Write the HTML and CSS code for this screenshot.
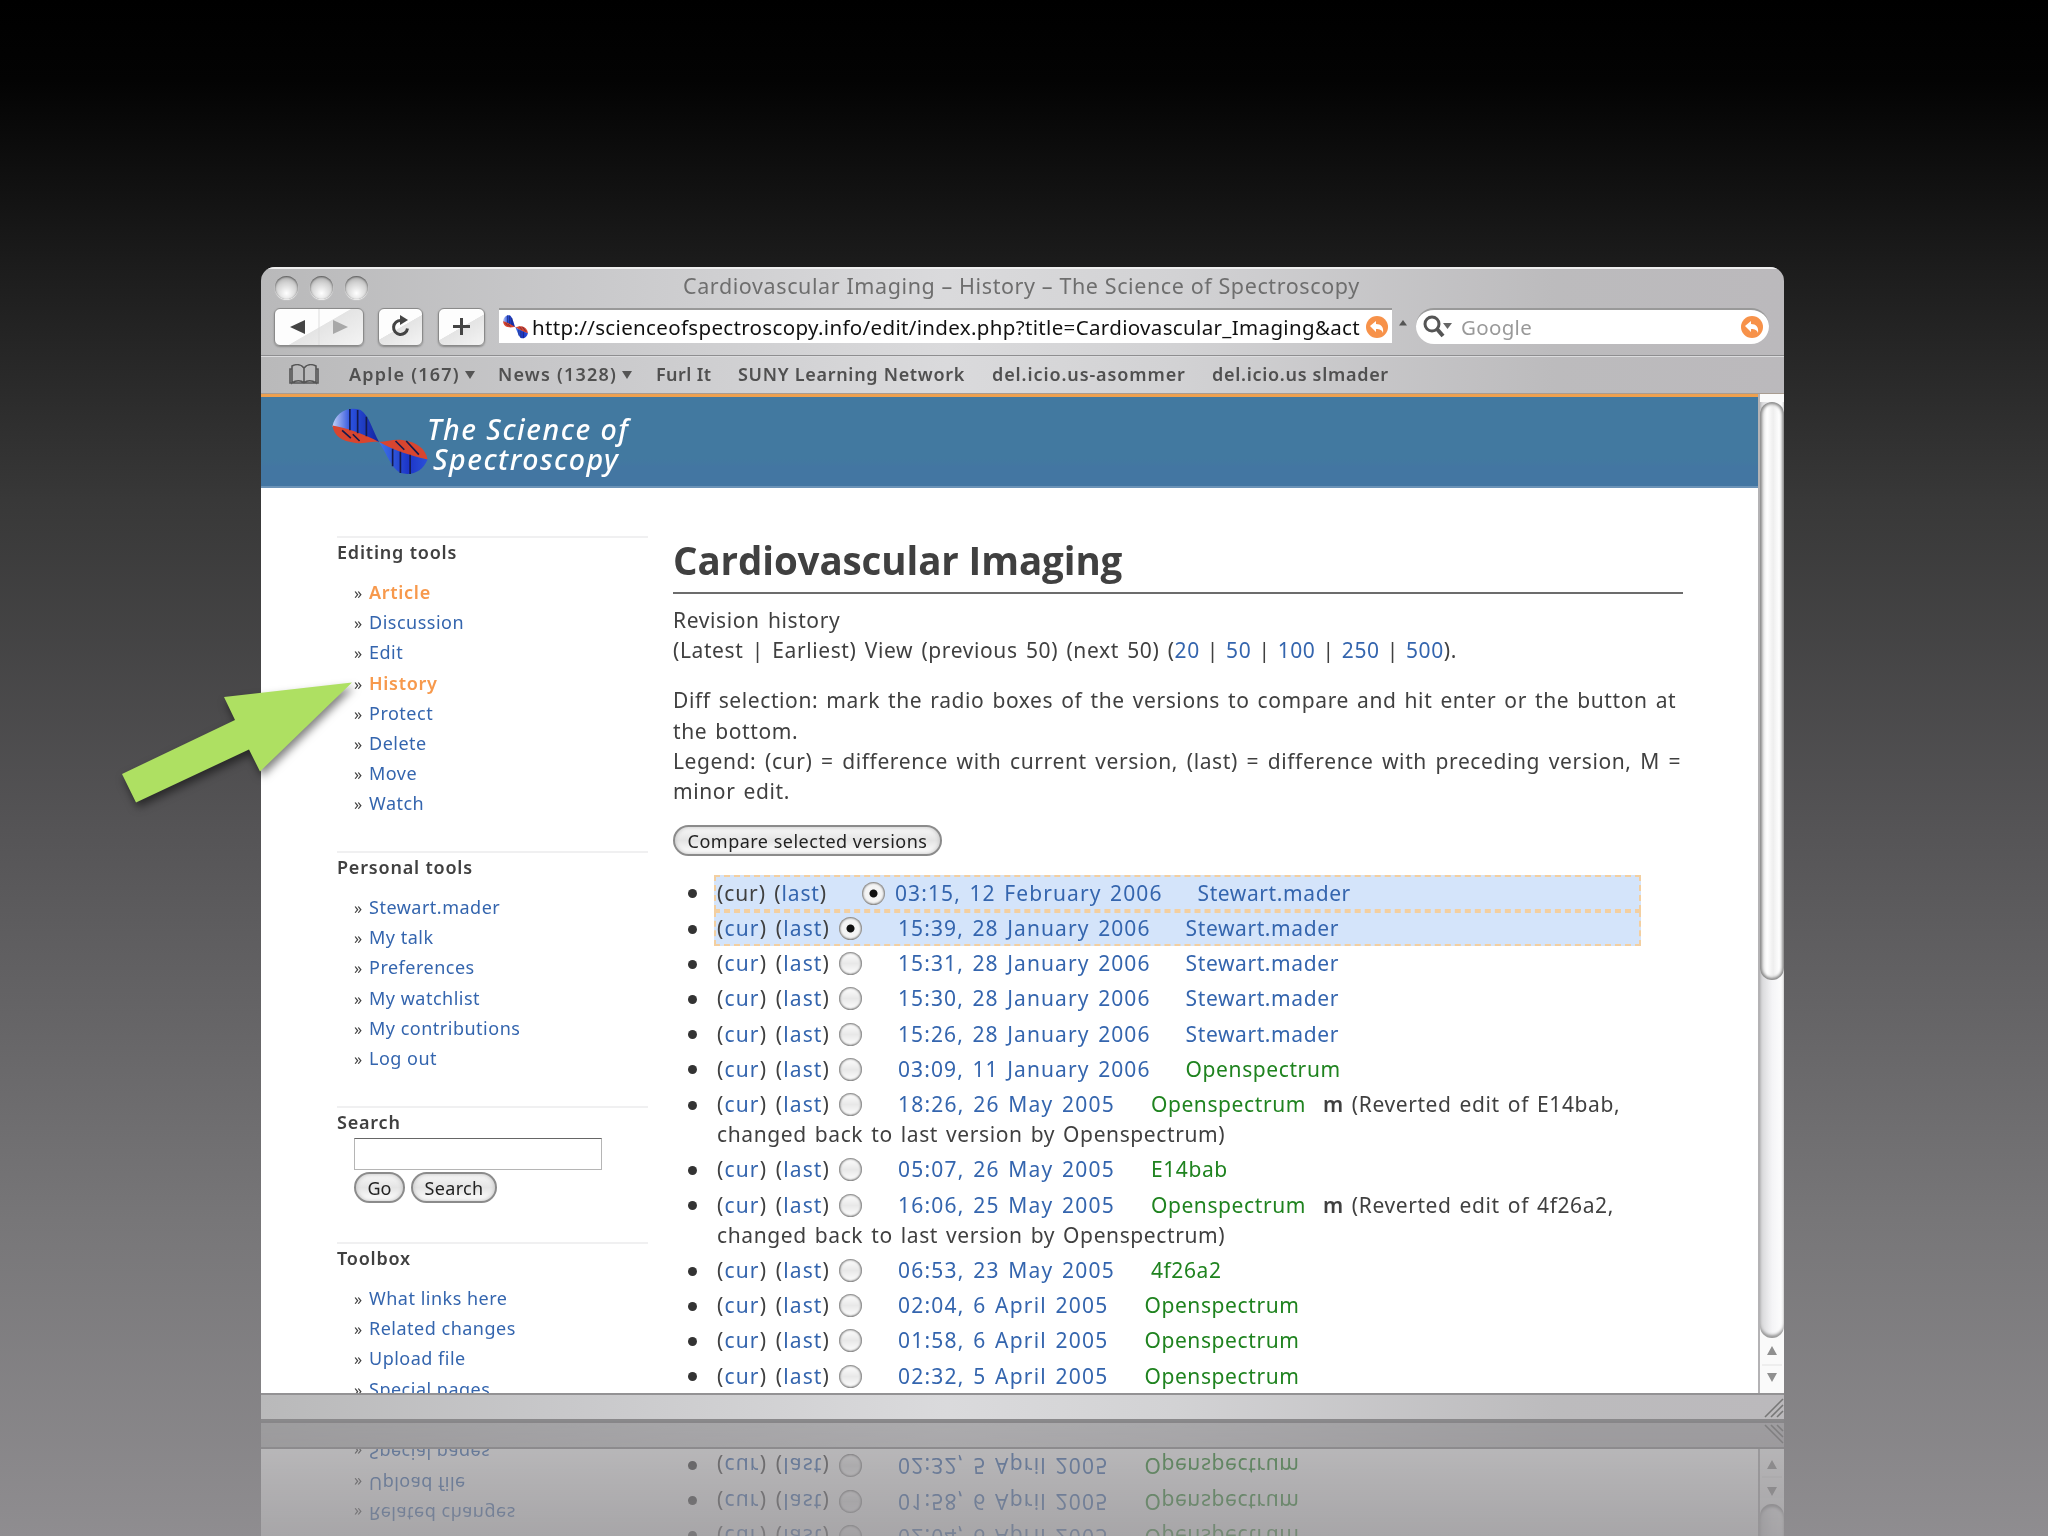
FILE: index.html
```html
<!DOCTYPE html>
<html>
<head>
<meta charset="utf-8">
<title>Cardiovascular Imaging - History</title>
<link rel="stylesheet" href="styles.css">
</head>
<body>

<div class="window">
  <div class="titlebar">
    <div class="lights"><span></span><span></span><span></span></div>
    <div class="title">Cardiovascular Imaging – History – The Science of Spectroscopy</div>
  </div>

  <div class="toolbar">
    <div class="btn nav">
      <svg width="88" height="36" viewBox="0 0 88 36"><path d="M30 11v14L15 18z" fill="#444"/><path d="M58 11v14l15-7z" fill="#a8a8a8"/><path d="M44 0v36" stroke="#ddd"/></svg>
    </div>
    <div class="btn reload">
      <svg width="43" height="36" viewBox="0 0 43 36"><path d="M22 11.500a7 7 0 1 0 6.500 8" fill="none" stroke="#444" stroke-width="3"/><path d="M21 6l8 5-8 5z" fill="#444"/></svg>
    </div>
    <div class="btn plus">
      <svg width="45" height="36" viewBox="0 0 45 36"><path d="M22.500 9v17M14 17.500h17" stroke="#444" stroke-width="3"/></svg>
    </div>
    <div class="address">
      <svg width="25" height="24" viewBox="0 0 98 70" preserveAspectRatio="none"><use href="#helix"/></svg>
      <span class="url">http://scienceofspectroscopy.info/edit/index.php?title=Cardiovascular_Imaging&amp;act</span>
      <svg class="snap" width="22" height="22" viewBox="0 0 22 22"><use href="#snapback"/></svg>
    </div>
    <svg class="caret" width="8" height="6" viewBox="0 0 8 6"><path d="M0 5.500L4 0l4 5.500z" fill="#555"/></svg>
    <div class="search">
      <svg width="31" height="24" viewBox="0 0 31 24"><circle cx="10" cy="9" r="7" fill="none" stroke="#555" stroke-width="3"/><path d="M15 14l6 7" stroke="#555" stroke-width="4"/><path d="M21 8h9l-4.500 6z" fill="#666"/></svg>
      <span class="google">Google</span>
      <svg class="snap" width="22" height="22" viewBox="0 0 22 22"><use href="#snapback"/></svg>
    </div>
  </div>

  <div class="bookmarks">
    <svg class="book" width="30" height="21" viewBox="0 0 30 21"><path d="M15 4C12 0 7 0 3 2v17c4-3 9-3 12 0 3-3 8-3 12 0V2C23 0 18 0 15 4zM15 4v15M3 5H1v14h28V5h-2" fill="none" stroke="#555" stroke-width="1.600"/></svg>
    <span class="b1">Apple (167)<i></i></span>
    <span class="b2">News (1328)<i></i></span>
    <span class="b3">Furl It</span>
    <span class="b4">SUNY Learning Network</span>
    <span class="b5">del.icio.us-asommer</span>
    <span class="b6">del.icio.us slmader</span>
  </div>

  <div class="view">
    <div class="page">
      <div class="banner">
        <svg class="logo" width="98" height="68" viewBox="0 0 98 70">
          <defs>
            <linearGradient id="blue" x1="0" y1="0" x2="1" y2="0">
              <stop offset="0" stop-color="#c3d0f5"/><stop offset=".4" stop-color="#2a50dd"/><stop offset="1" stop-color="#1224a0"/>
            </linearGradient>
            <linearGradient id="blue2" x1="0" y1="0" x2="1" y2="0">
              <stop offset="0" stop-color="#3f74ea"/><stop offset=".6" stop-color="#1c35c8"/><stop offset="1" stop-color="#2b50d8"/>
            </linearGradient>
            <g id="helix">
              <path d="M0 19C3 5 15-2 29 2c9 6 12 20 19 33C34 31 16 26 0 19z" fill="url(#blue)"/>
              <path d="M0 18c13 2 31 8 48 17-9-1-15 2-24 1C9 34 2 29 0 18z" fill="#d8452f"/>
              <path d="M48 35c8 0 14-3 24-2 15 2 24 9 26 20-14-2-34-8-50-18z" fill="#d8452f"/>
              <path d="M48 35c14 8 32 14 50 18-5 12-15 17-28 14-10-6-14-20-22-32z" fill="url(#blue2)"/>
              <path d="M18 1v22M26 2v24M35 9v20M10 23l9 8M21 27l7 7M62 42v18M70 45v22M80 48v20M76 34l13 14M65 34l9 9" stroke="#141a4c" stroke-width="1.700" fill="none"/>
            </g>
            <g id="snapback">
              <circle cx="11" cy="11" r="11" fill="#f7924a"/>
              <path d="M4 10l6-5v3c5 0 8 3 7 9-1-3-3-4-7-4v3z" fill="#fff"/>
            </g>
          </defs>
          <use href="#helix"/>
        </svg>
        <div class="sitename"><span>The Science of</span><span class="second">Spectroscopy</span></div>
      </div>

      <div class="columns">
        <div class="sidebar">
          <div class="portlet">
            <h5>Editing tools</h5>
            <ul>
              <li><a class="active" href="#">Article</a></li>
              <li><a href="#">Discussion</a></li>
              <li><a href="#">Edit</a></li>
              <li><a class="active" href="#">History</a></li>
              <li><a href="#">Protect</a></li>
              <li><a href="#">Delete</a></li>
              <li><a href="#">Move</a></li>
              <li><a href="#">Watch</a></li>
            </ul>
          </div>
          <div class="portlet">
            <h5>Personal tools</h5>
            <ul>
              <li><a href="#">Stewart.mader</a></li>
              <li><a href="#">My talk</a></li>
              <li><a href="#">Preferences</a></li>
              <li><a href="#">My watchlist</a></li>
              <li><a href="#">My contributions</a></li>
              <li><a href="#">Log out</a></li>
            </ul>
          </div>
          <div class="portlet find">
            <h5>Search</h5>
            <div class="field"></div>
            <div class="buttons"><span class="aqua go">Go</span><span class="aqua srch">Search</span></div>
          </div>
          <div class="portlet">
            <h5>Toolbox</h5>
            <ul>
              <li><a href="#">What links here</a></li>
              <li><a href="#">Related changes</a></li>
              <li><a href="#">Upload file</a></li>
              <li><a href="#">Special pages</a></li>
            </ul>
          </div>
        </div>

        <div class="content">
          <h1>Cardiovascular Imaging</h1>
          <p class="nav-links">Revision history<br>(Latest | Earliest) View (previous 50) (next 50) <span class="limits">(<a href="#">20</a> | <a href="#">50</a> | <a href="#">100</a> | <a href="#">250</a> | <a href="#">500</a>).</span></p>
          <p class="diff">Diff selection: mark the radio boxes of the versions to compare and hit enter or the button at<br>the bottom.<br><span class="legend">Legend: (cur) = difference with current version, (last) = difference with preceding version, M =</span><br>minor edit.</p>
          <span class="aqua compare">Compare selected versions</span>
          <ul class="history">
            <li class="selected first"><span class="marks">(cur) (<a href="#">last</a>)</span><span class="radio on"></span><a class="date" href="#">03:15, 12 February 2006</a><a href="#">Stewart.mader</a></li>
            <li class="selected"><span class="marks">(<a href="#">cur</a>) (<a href="#">last</a>)</span><span class="radio on"></span><a class="date" href="#">15:39, 28 January 2006</a><a href="#">Stewart.mader</a></li>
            <li><span class="marks">(<a href="#">cur</a>) (<a href="#">last</a>)</span><span class="radio"></span><a class="date" href="#">15:31, 28 January 2006</a><a href="#">Stewart.mader</a></li>
            <li><span class="marks">(<a href="#">cur</a>) (<a href="#">last</a>)</span><span class="radio"></span><a class="date" href="#">15:30, 28 January 2006</a><a href="#">Stewart.mader</a></li>
            <li><span class="marks">(<a href="#">cur</a>) (<a href="#">last</a>)</span><span class="radio"></span><a class="date" href="#">15:26, 28 January 2006</a><a href="#">Stewart.mader</a></li>
            <li><span class="marks">(<a href="#">cur</a>) (<a href="#">last</a>)</span><span class="radio"></span><a class="date" href="#">03:09, 11 January 2006</a><a class="new" href="#">Openspectrum</a></li>
            <li><span class="marks">(<a href="#">cur</a>) (<a href="#">last</a>)</span><span class="radio"></span><a class="date old" href="#">18:26, 26 May 2005</a><a class="new" href="#">Openspectrum</a><b>m</b> (Reverted edit of E14bab,<br>changed back to last version by Openspectrum)</li>
            <li><span class="marks">(<a href="#">cur</a>) (<a href="#">last</a>)</span><span class="radio"></span><a class="date old" href="#">05:07, 26 May 2005</a><a class="new" href="#">E14bab</a></li>
            <li><span class="marks">(<a href="#">cur</a>) (<a href="#">last</a>)</span><span class="radio"></span><a class="date old" href="#">16:06, 25 May 2005</a><a class="new" href="#">Openspectrum</a><b>m</b> (Reverted edit of 4f26a2,<br>changed back to last version by Openspectrum)</li>
            <li><span class="marks">(<a href="#">cur</a>) (<a href="#">last</a>)</span><span class="radio"></span><a class="date old" href="#">06:53, 23 May 2005</a><a class="new" href="#">4f26a2</a></li>
            <li><span class="marks">(<a href="#">cur</a>) (<a href="#">last</a>)</span><span class="radio"></span><a class="date old" href="#">02:04, 6 April 2005</a><a class="new" href="#">Openspectrum</a></li>
            <li><span class="marks">(<a href="#">cur</a>) (<a href="#">last</a>)</span><span class="radio"></span><a class="date old" href="#">01:58, 6 April 2005</a><a class="new" href="#">Openspectrum</a></li>
            <li><span class="marks">(<a href="#">cur</a>) (<a href="#">last</a>)</span><span class="radio"></span><a class="date old" href="#">02:32, 5 April 2005</a><a class="new" href="#">Openspectrum</a></li>
          </ul>
        </div>
      </div>
    </div>

    <div class="scrollbar">
      <div class="track"><div class="thumb"></div></div>
      <svg class="arrows" width="24" height="54" viewBox="0 0 24 54"><path d="M7 17l5-9 5 9zM7 35l5 9 5-9z" fill="#909090"/><path d="M2 27h20" stroke="#e2e2e2"/></svg>
    </div>
  </div>

  <div class="statusbar">
    <svg width="21" height="22" viewBox="0 0 21 22"><path d="M2 20L20 2M8 20L20 8M14 20l6-6" stroke="#777" stroke-width="1.600"/></svg>
  </div>
</div>

<!-- pointer to the History link -->
<svg class="pointer" width="400" height="200" viewBox="0 0 400 200">
  <path d="M122 124L235 70l-11-23 128-14.500-92 89-11-22-113 53z" fill="#aee062"/>
</svg>

</body>
</html>
```

FILE: styles.css
```css
body {
  margin: 0;
  height: 1536px;
  overflow: hidden;
  background: linear-gradient(#000 0, #030303 80px, #1c1c1c 267px, #383838 500px, #555456 830px, #777678 1220px, #8f8d90 1536px);
  font-family: "Noto Sans", "Open Sans", sans-serif;
  color: #404040;
}

a {
  color: #3465ae;
  text-decoration: none;
}

ul {
  list-style: none;
  margin: 0;
  padding: 0;
}

.window {
  display: flex;
  flex-direction: column;
  width: 1523px;
  height: 1154px;
  margin: 267px 0 0 261px;
  border-radius: 14px 14px 0 0;
  overflow: hidden;
  background: linear-gradient(90deg, #b9b9ba, #c8c8ca 20%, #dadadc 45%, #d2d2d4 60%, #bcbbbd 85%, #bbb9bc);
  -webkit-box-reflect: below 0 linear-gradient(transparent 88%, rgba(0,0,0,.22) 90%, rgba(0,0,0,.46));
}

/* title bar */
.titlebar {
  display: flex;
  align-items: center;
  height: 40px;
  box-shadow: inset 0 2px 0 #eee;
}

.lights {
  display: flex;
  gap: 12px;
  width: 422px;
  padding-left: 14px;
  box-sizing: border-box;
}

.lights span {
  width: 23px;
  height: 23px;
  border-radius: 50%;
  background: radial-gradient(circle at 50% 75%, #fff, #d4d4d4 50%, #999);
  box-shadow: inset 0 1px 2px #555, 0 1px 1px #eee;
}

.title {
  font-size: 21.500px;
  letter-spacing: .6px;
  line-height: 38px;
  padding-bottom: 2px;
  color: #6e6e6e;
  white-space: nowrap;
}

/* toolbar */
.toolbar {
  display: flex;
  align-items: flex-start;
  height: 49px;
  padding: 1px 15px 0 13px;
  box-sizing: border-box;
  border-bottom: 1px solid #8e8e90;
}

.btn {
  height: 36px;
  border: 1px solid #8a8a8a;
  border-radius: 6px;
  background: linear-gradient(150deg, #fdfdfd 50%, #e4e4e4 51%, #f4f4f4);
  box-shadow: 0 1px 2px #888;
}

.nav { width: 88px; }
.reload { width: 43px; margin-left: 14px; }
.plus { width: 45px; margin-left: 15px; }

.address {
  display: flex;
  align-items: center;
  width: 893px;
  height: 35px;
  margin-left: 14px;
  padding: 0 4px;
  box-sizing: border-box;
  background: #fff;
  border-top: 2px solid #999;
}

.url {
  flex: 1;
  margin-left: 4px;
  font-size: 20.500px;
  letter-spacing: .34px;
  line-height: 32px;
  color: #111;
  white-space: nowrap;
}

.caret {
  margin: 12px 9px 0 7px;
}

.search {
  display: flex;
  align-items: center;
  width: 353px;
  height: 36px;
  padding: 0 6px;
  box-sizing: border-box;
  border-radius: 18px;
  border-top: 2px solid #999;
  background: #fff;
}

.google {
  flex: 1;
  margin-left: 8px;
  font-size: 20.500px;
  letter-spacing: .3px;
  color: #999;
}

/* bookmarks bar */
.bookmarks {
  display: flex;
  align-items: center;
  height: 38px;
  padding: 0 0 2px 28px;
  box-sizing: border-box;
  border-top: 1px solid #dcdcde;
  border-bottom: 1px solid #a89c90;
  font-size: 18px;
  font-weight: 600;
  letter-spacing: .7px;
  color: #505050;
  white-space: nowrap;
}

.bookmarks i {
  display: inline-block;
  margin: 0 0 2px 5px;
  border: 5px solid transparent;
  border-top: 8px solid #555;
  border-bottom: 0;
}

.b1 { width: 149px; margin-left: 30px; letter-spacing: 1.200px; }
.b2 { width: 158px; letter-spacing: 1.200px; }
.b3 { width: 82px; letter-spacing: .4px; }
.b4 { width: 254px; }
.b5 { width: 220px; letter-spacing: .9px; }

/* page view */
.view {
  display: flex;
  height: 999px;
}

.page {
  width: 1497px;
  background: #fff;
  overflow: hidden;
}

.banner {
  display: flex;
  height: 94px;
  padding: 11px 0 0 70px;
  box-sizing: border-box;
  border-top: 3px solid #eda04f;
  border-bottom: 2px solid #6c93b7;
  background: linear-gradient(#4279a0 70%, #4376a2 78%);
}

.sitename {
  font-style: italic;
  font-size: 28.500px;
  font-weight: 500;
  letter-spacing: 1.500px;
  line-height: 30px;
  color: #fff;
  padding-top: 6px;
}

.sitename span {
  display: block;
  margin-left: -2px;
}

.sitename .second {
  margin-left: 4px;
}

.columns {
  display: flex;
}

.sidebar {
  width: 311px;
  padding: 48px 0 0 76px;
}

.portlet {
  height: 315px;
  box-sizing: border-box;
  border-top: 2px solid #f0f0f1;
}

.portlet + .portlet { height: 255px; }
.portlet + .find { height: 136px; }

h5 {
  margin: 0;
  font-size: 18px;
  letter-spacing: .8px;
  line-height: 29px;
  font-weight: 600;
}

.portlet ul {
  padding: 10px 0 0 17px;
}

.portlet li {
  font-size: 18px;
  letter-spacing: .5px;
  line-height: 30.200px;
}

.portlet li:before {
  content: "»";
  display: inline-block;
  width: 15px;
  font-size: 16px;
  line-height: 1;
}

.portlet a.active {
  color: #f7994c;
  font-weight: 600;
  letter-spacing: .7px;
}

.field {
  width: 246px;
  height: 30px;
  margin: 1px 0 2px 17px;
  border: 1px solid #b5b5b5;
  border-top-color: #666;
}

.buttons {
  display: flex;
  gap: 6px;
  margin-left: 17px;
}

.aqua {
  display: flex;
  justify-content: center;
  align-items: center;
  height: 31px;
  box-sizing: border-box;
  border: 2px solid #8b8b8b;
  border-radius: 16px;
  background: linear-gradient(#f8f8f8, #e4e4e4 50%, #fff);
  box-shadow: inset 0 0 4px #bbb;
  font-size: 18px;
  color: #222;
}

.go { width: 51px; }
.srch { width: 86px; letter-spacing: .3px; }
.compare { width: 269px; letter-spacing: .5px; word-spacing: 0; }

/* article */
.content {
  width: 1010px;
  margin-left: 25px;
  padding-top: 45px;
  font-size: 21px;
  letter-spacing: .6px;
  word-spacing: 2px;
  line-height: 30.200px;
  white-space: nowrap;
}

h1 {
  margin: 0 0 11px;
  height: 59px;
  font-family: "Open Sans", sans-serif;
  font-size: 38.500px;
  letter-spacing: -.1px;
  word-spacing: 0;
  line-height: 54px;
  border-bottom: 2px solid #6c6c6c;
}

p { margin: 0; }
.nav-links { word-spacing: 2.300px; }
.limits { word-spacing: 1px; }
.legend { word-spacing: 2.600px; }
.diff { margin: 20px 0 19px; }

.history {
  width: 927px;
  margin: 19px 0 0 41px;
  line-height: 30.300px;
}

.history li {
  position: relative;
  padding: 2.450px 2px 2.450px 3px;
}

.history li:before {
  content: "";
  position: absolute;
  left: -26px;
  top: 14px;
  width: 9px;
  height: 9px;
  border-radius: 50%;
  background: #333;
}

.history .selected {
  padding: .5px 2px .5px 1px;
  border: 2px dashed #f3cfa0;
  background: #d4e4fa;
}

.history .selected:before {
  left: -28px;
  top: 12px;
}

.marks {
  display: inline-block;
  width: 122px;
  letter-spacing: 1.150px;
}

.radio {
  display: inline-block;
  width: 23px;
  height: 23px;
  margin-right: 36px;
  border-radius: 50%;
  vertical-align: -4px;
  background: linear-gradient(#fff, #e8e8e8 50%, #fff);
  box-shadow: inset 0 0 2px 1px #777;
}

.radio.on {
  background: radial-gradient(circle, #111 3.500px, #f4f4f4 4.500px);
}

.first .marks { width: 145px; letter-spacing: .9px; }
.first .radio { margin-right: 10px; }
.date { margin-right: 35px; letter-spacing: 1.100px; }
.date.old { margin-right: 36px; letter-spacing: 1.200px; }
.history a.new { color: #1f831f; }
.history b { margin-left: 17px; font-weight: 600; }

/* scroll bar */
.scrollbar {
  display: flex;
  flex-direction: column;
  width: 26px;
  box-sizing: border-box;
  border-left: 2px solid #b4b3b5;
  background: #fafafa;
}

.track {
  height: 936px;
  flex-shrink: 0;
  margin-top: 8px;
  border-radius: 0 0 12px 12px;
  background: linear-gradient(90deg, #d4d4d6, #f4f4f6 50%, #fff);
  box-shadow: inset 0 -3px 3px #999;
}

.thumb {
  height: 578px;
  border-radius: 12px;
  background: linear-gradient(90deg, #ddd, #fff 30%, #eee 55%, #fff 80%);
  box-shadow: inset 0 0 3px 2px #888;
}

/* status bar */
.statusbar {
  display: flex;
  justify-content: flex-end;
  align-items: flex-end;
  height: 28px;
  box-sizing: border-box;
  border-top: 2px solid #939294;
  border-bottom: 2px solid #8a898b;
}

.pointer {
  position: absolute;
  left: 0;
  top: 650px;
  filter: drop-shadow(2px 5px 4px rgba(0,0,0,.5));
}
```
